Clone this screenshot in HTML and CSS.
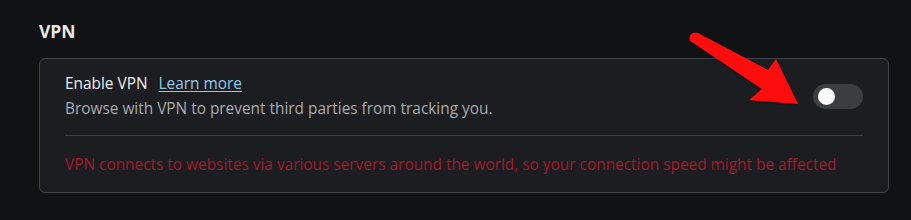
FILE: index.html
```html
<!DOCTYPE html>
<html>
<head>
<meta charset="utf-8">
<link rel="stylesheet" href="styles.css">
</head>
<body>
<main class="page">
  <h2 class="section-title">VPN</h2>
  <section class="card">
    <div class="row">
      <div class="text">
        <div class="label-line">
          <span class="label">Enable VPN</span>
          <a class="learn" href="#">Learn more</a>
        </div>
        <div class="desc">Browse with VPN to prevent third parties from tracking you.</div>
      </div>
      <div class="toggle"><span class="knob"></span></div>
    </div>
    <div class="divider"></div>
    <p class="warning">VPN connects to websites via various servers around the world, so your connection speed might be affected</p>
  </section>
  <svg class="arrow" width="911" height="220" viewBox="0 0 911 220">
    <defs>
      <filter id="sh" x="-20%" y="-20%" width="140%" height="140%">
        <feDropShadow dx="0" dy="1" stdDeviation="1.2" flood-color="#000" flood-opacity="0.6"/>
      </filter>
    </defs>
    <path d="M690,36 Q692,31 698,33 L768,70 L776,59 L798,104 L749,100 L762,89 L692,42 Q688,40 690,36 Z" fill="#ff0a0a" filter="url(#sh)"/>
  </svg>
</main>
</body>
</html>
```

FILE: styles.css
```css
html, body {
  margin: 0;
  padding: 0;
  background: #111214;
  width: 911px;
  height: 220px;
  overflow: hidden;
}
.page {
  position: relative;
  width: 911px;
  height: 220px;
  box-sizing: border-box;
  padding: 20px 23px 0 39px;
  font-family: "Open Sans", "Noto Sans", sans-serif;
}
.section-title {
  margin: 0 0 16px 0;
  font-size: 17.5px;
  line-height: 22px;
  font-weight: 700;
  color: #e9e9ea;
}
.card {
  box-sizing: border-box;
  width: 850px;
  height: 135px;
  background: #1b1d21;
  border: 1px solid #3f4247;
  border-radius: 6px;
  padding: 13px 25px 0 25px;
}
.row {
  display: flex;
  align-items: center;
  justify-content: space-between;
}
.label-line {
  display: flex;
  align-items: baseline;
  gap: 11px;
  line-height: 24px;
}
.label {
  font-size: 15.4px;
  color: #f0f0f1;
}
.learn {
  font-size: 15.4px;
  color: #8fcbe8;
  text-decoration: underline;
  text-underline-offset: 2px;
}
.desc {
  margin-top: 1px;
  font-size: 15.4px;
  line-height: 24px;
  color: #a9abae;
}
.toggle {
  width: 50px;
  height: 25px;
  border-radius: 13px;
  background: #3b3d41;
  display: flex;
  align-items: center;
  padding-left: 5px;
  box-sizing: border-box;
}
.knob {
  width: 17px;
  height: 17px;
  border-radius: 50%;
  background: #ffffff;
}
.divider {
  height: 1px;
  background: #3b3e43;
  margin-top: 14px;
}
.warning {
  margin: 19px 0 0 0;
  font-size: 15.4px;
  line-height: 20px;
  color: #a3192c;
}
.arrow {
  position: absolute;
  left: 0;
  top: 0;
  pointer-events: none;
}
```
